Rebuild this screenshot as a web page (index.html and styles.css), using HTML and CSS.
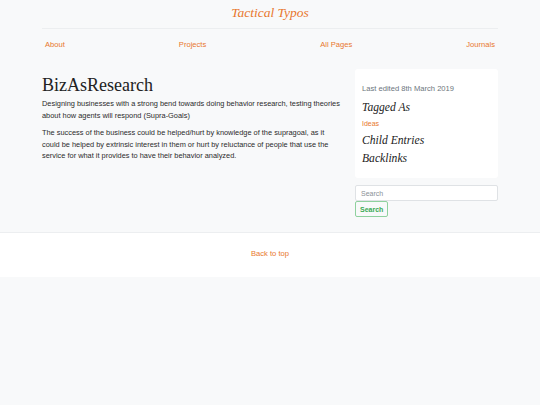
FILE: index.html
```html
<!DOCTYPE html>
<html>
<head>
<meta charset="utf-8">
<link rel="stylesheet" href="styles.css">
</head>
<body>
<div class="page">
  <div class="container">
    <header class="header">
      <h1 class="brand">Tactical Typos</h1>
    </header>
    <nav class="nav">
      <a href="#">About</a>
      <a href="#">Projects</a>
      <a href="#">All Pages</a>
      <a href="#">Journals</a>
    </nav>
    <div class="main">
      <article class="content">
        <h2 class="title">BizAsResearch</h2>
        <p>Designing businesses with a strong bend towards doing behavior research, testing theories about how agents will respond (Supra-Goals)</p>
        <p>The success of the business could be helped/hurt by knowledge of the supragoal, as it could be helped by extrinsic interest in them or hurt by reluctance of people that use the service for what it provides to have their behavior analyzed.</p>
      </article>
      <aside class="sidebar">
        <div class="card">
          <div class="edited">Last edited 8th March 2019</div>
          <h3 class="side-head">Tagged As</h3>
          <a class="tag" href="#">Ideas</a>
          <h3 class="side-head">Child Entries</h3>
          <h3 class="side-head">Backlinks</h3>
        </div>
        <form class="search">
          <input class="search-input" type="text" placeholder="Search">
          <button class="search-btn" type="button">Search</button>
        </form>
      </aside>
    </div>
  </div>
  <footer class="footer">
    <a href="#">Back to top</a>
  </footer>
</div>
</body>
</html>
```
FILE: styles.css
```css
html, body {
  margin: 0;
  padding: 0;
  background: #f8f9fa;
}
body {
  font-family: "Liberation Sans", Arial, sans-serif;
  font-size: 7.4px;
  color: #2a2a2a;
}
a {
  color: #e8772e;
  text-decoration: none;
}
.container {
  width: 456px;
  margin: 0 auto;
}
.header {
  border-bottom: 1px solid #eceef0;
  text-align: center;
  padding: 5px 0 7px;
}
.brand {
  margin: 0;
  font-family: "Liberation Serif", Georgia, serif;
  font-style: italic;
  font-weight: normal;
  font-size: 13.5px;
  line-height: 16px;
  color: #e8772e;
}
.nav {
  display: flex;
  justify-content: space-between;
  padding: 10px 3px 0;
  line-height: 12px;
  font-size: 7.6px;
}
.main {
  display: grid;
  grid-template-columns: 1fr 143px;
  column-gap: 12px;
  margin-top: 18px;
}
.content {
  padding-top: 6px;
}
.title {
  margin: 0 0 3px;
  font-family: "Liberation Serif", Georgia, serif;
  font-weight: normal;
  font-size: 18px;
  line-height: 20px;
  color: #222;
}
.content p {
  margin: 0 0 6px;
  line-height: 11.6px;
}
.card {
  background: #fff;
  border-radius: 3px;
  padding: 15px 7px 8px;
}
.edited {
  color: #6c757d;
  font-size: 7.6px;
  line-height: 10px;
  margin-bottom: 7px;
}
.side-head {
  margin: 0 0 4px;
  font-family: "Liberation Serif", Georgia, serif;
  font-style: italic;
  font-weight: normal;
  font-size: 11.6px;
  line-height: 14px;
  color: #222;
}
.tag {
  display: block;
  font-size: 7px;
  line-height: 10px;
  margin-bottom: 5px;
}
.search {
  margin-top: 7px;
  display: flex;
  flex-direction: column;
  align-items: flex-start;
}
.search-input {
  box-sizing: border-box;
  width: 100%;
  height: 16px;
  border: 1px solid #dfe2e5;
  border-radius: 2px;
  padding: 0 5px;
  font-family: "Liberation Sans", Arial, sans-serif;
  font-size: 7px;
  background: #fff;
  color: #495057;
  margin: 0;
}
.search-input::placeholder {
  color: #8a9096;
}
.search-btn {
  box-sizing: border-box;
  height: 16px;
  padding: 0 4px;
  border: 1px solid #8fd19e;
  border-radius: 2px;
  background: transparent;
  color: #3aa954;
  font-family: "Liberation Sans", Arial, sans-serif;
  font-weight: bold;
  font-size: 7px;
  margin: 0;
}
.footer {
  margin-top: 15px;
  background: #fff;
  border-top: 1px solid #eceef0;
  box-sizing: border-box;
  height: 45px;
  padding-bottom: 4px;
  display: flex;
  align-items: center;
  justify-content: center;
  font-size: 7.6px;
}
```
